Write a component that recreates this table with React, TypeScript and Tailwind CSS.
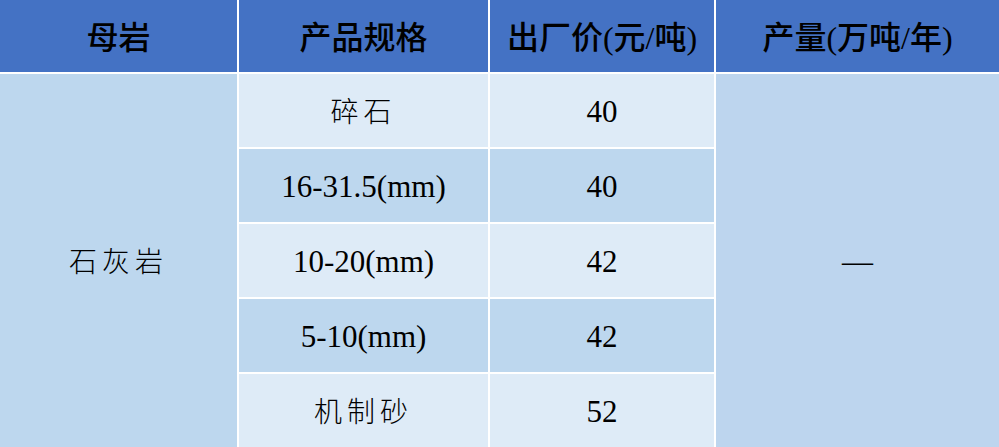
const rows = [
    { spec: "碎石", price: "40", shade: "light" },
    { spec: "16-31.5(mm)", price: "40", shade: "dark" },
    { spec: "10-20(mm)", price: "42", shade: "light" },
    { spec: "5-10(mm)", price: "42", shade: "dark" },
    { spec: "机制砂", price: "52", shade: "light" },
];

const headFont = { fontFamily: '"Liberation Serif", "Noto Sans CJK SC", serif' };

export default function App() {
    return (
        <div
            className="grid h-[447px] w-[999px] grid-cols-[237px_249px_224px_1fr] grid-rows-[72px_repeat(5,1fr)] gap-[2px] bg-white text-black"
            style={headFont}
        >
            {["母岩", "产品规格", "出厂价(元/吨)", "产量(万吨/年)"].map((h) => (
                <div
                    key={h}
                    className="flex items-center justify-center bg-[#4472c4] pt-1 text-[32px] font-medium leading-none"
                >
                    {h}
                </div>
            ))}

            <div className="row-span-5 row-start-2 flex items-center justify-center bg-[#bdd7ee] pt-1 text-[28px] font-light tracking-[5px]">
                石灰岩
            </div>

            {rows.map((r, i) => {
                const bg = r.shade === "light" ? "bg-[#deebf7]" : "bg-[#bdd7ee]";
                const isCjk = /[\u4e00-\u9fff]/.test(r.spec);
                return (
                    <div key={i} className="contents">
                        <div
                            className={`col-start-2 flex items-center justify-center pt-1 ${bg} ${
                                isCjk
                                    ? "text-[28px] font-light tracking-[5px]"
                                    : "text-[31px]"
                            }`}
                        >
                            {r.spec}
                        </div>
                        <div className={`col-start-3 flex items-center justify-center pt-1 ${bg} text-[31px]`}>
                            {r.price}
                        </div>
                    </div>
                );
            })}

            <div className="col-start-4 row-span-5 row-start-2 flex items-center justify-center bg-[#bdd5ee] pt-1 text-[31px]">
                —
            </div>
        </div>
    );
}
